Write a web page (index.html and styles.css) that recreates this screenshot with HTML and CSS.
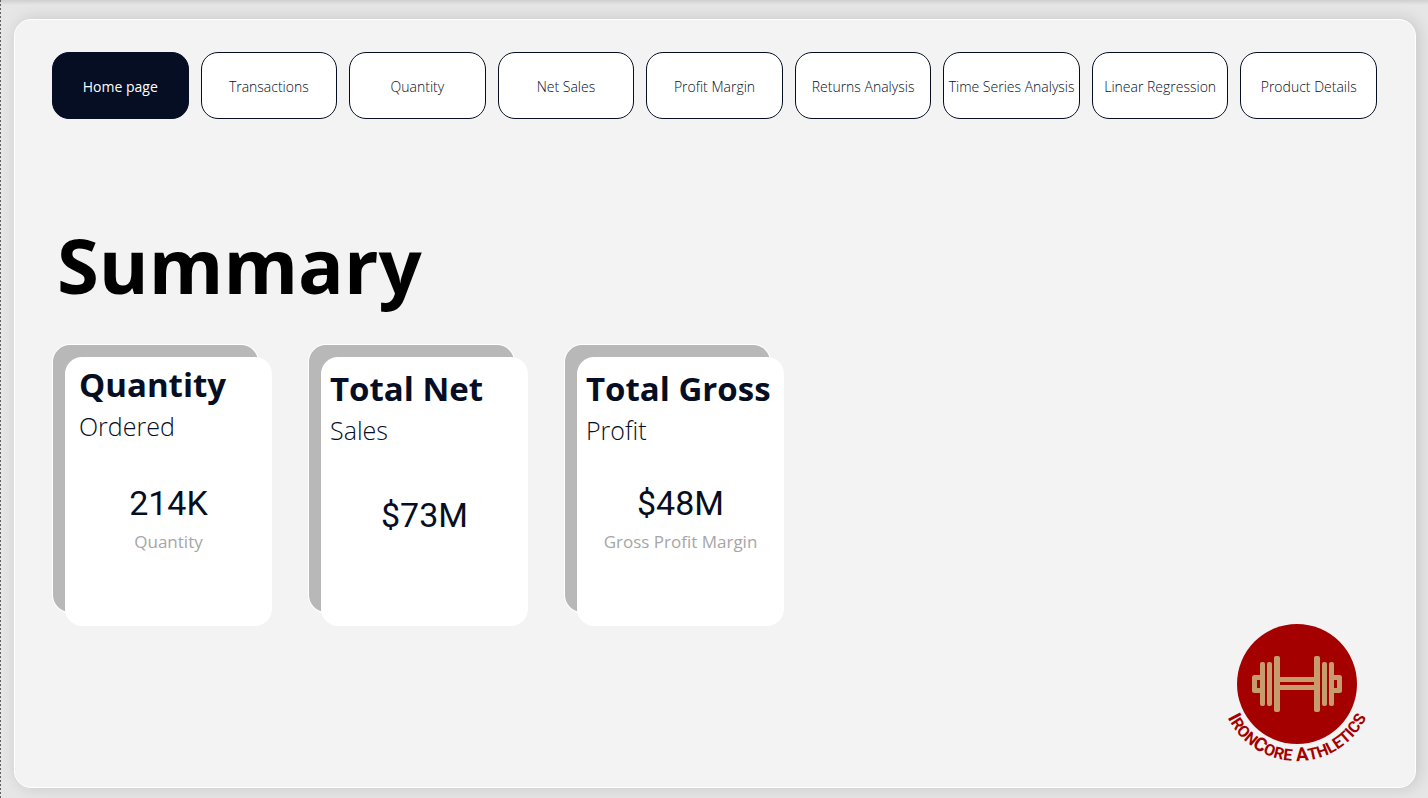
FILE: index.html
```html
<!DOCTYPE html>
<html lang="en">
<head>
<meta charset="utf-8">
<title>IronCore Athletics</title>
<link rel="stylesheet" href="styles.css">
</head>
<body>
<div class="panel">
  <nav class="tabs">
    <button class="tab tab-active" type="button">Home page</button>
    <button class="tab" type="button">Transactions</button>
    <button class="tab" type="button">Quantity</button>
    <button class="tab" type="button">Net Sales</button>
    <button class="tab" type="button">Profit Margin</button>
    <button class="tab" type="button">Returns Analysis</button>
    <button class="tab" type="button">Time Series Analysis</button>
    <button class="tab" type="button">Linear Regression</button>
    <button class="tab" type="button">Product Details</button>
  </nav>
  <div class="content">
    <main class="summary">
      <h1 class="title">Summary</h1>
      <div class="cards">
        <section class="card">
          <div class="face face-inset">
            <h2 class="name">Quantity</h2>
            <p class="sub">Ordered</p>
            <div class="metric">
              <p class="value">214K</p>
              <p class="caption">Quantity</p>
            </div>
          </div>
        </section>
        <section class="card">
          <div class="face">
            <h2 class="name">Total Net</h2>
            <p class="sub">Sales</p>
            <div class="metric metric-single">
              <p class="value">$73M</p>
            </div>
          </div>
        </section>
        <section class="card">
          <div class="face">
            <h2 class="name">Total Gross</h2>
            <p class="sub">Profit</p>
            <div class="metric">
              <p class="value">$48M</p>
              <p class="caption">Gross Profit Margin</p>
            </div>
          </div>
        </section>
      </div>
    </main>
    <svg class="logo" viewBox="0 0 160 150" role="img" aria-label="IronCore Athletics">
      <circle cx="80" cy="64" r="60" fill="#a40000"/>
      <g fill="#c69c6d">
        <rect x="57" y="57" width="46" height="5"/>
        <rect x="57" y="65" width="46" height="5"/>
        <rect x="57" y="36" width="6" height="56" rx="2"/>
        <rect x="97" y="36" width="6" height="56" rx="2"/>
        <rect x="50" y="42" width="5" height="44" rx="2"/>
        <rect x="105" y="42" width="5" height="44" rx="2"/>
        <rect x="43" y="42" width="5" height="44" rx="2"/>
        <rect x="112" y="42" width="5" height="44" rx="2"/>
      </g>
      <path d="M45 57.500H37.500V70.500H45M115 57.500H122.500V70.500H115" fill="none" stroke="#c69c6d" stroke-width="5" stroke-linejoin="round"/>
      <path id="arc" d="M3 64A77 77 0 0 0 157 64" fill="none"/>
      <text class="brand"><textPath href="#arc" startOffset="50%" text-anchor="middle">I<tspan class="brand-small">RON</tspan>C<tspan class="brand-small">ORE</tspan> A<tspan class="brand-small">THLETICS</tspan></textPath></text>
    </svg>
  </div>
</div>
</body>
</html>
```
FILE: styles.css
```css
* {
  box-sizing: border-box;
}

body {
  margin: 0;
  min-height: 100vh;
  padding: 19px 12px 10px 14px;
  display: flex;
  flex-direction: column;
  font-family: "Open Sans", "Noto Sans", sans-serif;
  color: #050e23;
  background:
    repeating-linear-gradient(#606060 0 2px, transparent 2px 4px) left / 1px 100% no-repeat,
    linear-gradient(#cfcfcf, transparent 5px),
    #e6e6e6;
}

h1, h2, p {
  margin: 0;
}

.panel {
  flex: 1;
  display: flex;
  flex-direction: column;
  padding: 32px 38px 17px 37px;
  border: 1px solid #fff;
  border-radius: 17px;
  background: #f3f3f3;
  box-shadow: 3px 0 16px rgba(0, 0, 0, 0.14);
}

.tabs {
  display: grid;
  grid-template-columns: repeat(9, minmax(0, 1fr));
  gap: 12px;
}

.tab {
  height: 67px;
  padding: 2px 0 0;
  border: 1px solid #050e23;
  border-radius: 17px;
  background: #fff;
  color: #050e23;
  font: 300 14px/20px "Open Sans", "Noto Sans", sans-serif;
  white-space: nowrap;
}

.tab-active {
  background: #050e23;
  color: #fff;
  font-weight: 400;
}

.content {
  flex: 1;
  display: flex;
  justify-content: space-between;
}

.summary {
  padding-top: 92px;
}

.title {
  padding-left: 5px;
  font-size: 76px;
  line-height: 108px;
  font-weight: 700;
  color: #000;
}

.cards {
  display: flex;
  gap: 37px;
  padding: 26px 0 0 1px;
}

.card {
  position: relative;
  width: 219px;
  padding: 12px 0 0 12px;
}

.card::before {
  content: "";
  position: absolute;
  inset: 0 14px 14px 0;
  border-radius: 17px;
  background: #b8b8b8;
  box-shadow: 0 0 0 1px #fff;
}

.face {
  position: relative;
  min-height: 269px;
  padding: 8px 9px;
  border-radius: 17px;
  background: #fff;
}

.face-inset {
  padding: 4px 14px;
}

.name {
  font-size: 33px;
  line-height: 48px;
  font-weight: 700;
  white-space: nowrap;
}

.sub {
  font-size: 25px;
  line-height: 34px;
  font-weight: 300;
}

.metric {
  padding-top: 34px;
  text-align: center;
}

.face-inset .metric {
  padding-top: 38px;
}

.metric-single {
  padding-top: 46px;
}

.value {
  font: 400 34px/44px Roboto, sans-serif;
}

.caption {
  font-size: 17px;
  line-height: 34px;
  color: #a6a6a6;
  white-space: nowrap;
}

.logo {
  width: 160px;
  height: 150px;
  align-self: flex-end;
}

.brand {
  font: 700 19px "Liberation Sans Narrow", Roboto, sans-serif;
  fill: #a40000;
}

.brand-small {
  font-size: 16px;
}
```
